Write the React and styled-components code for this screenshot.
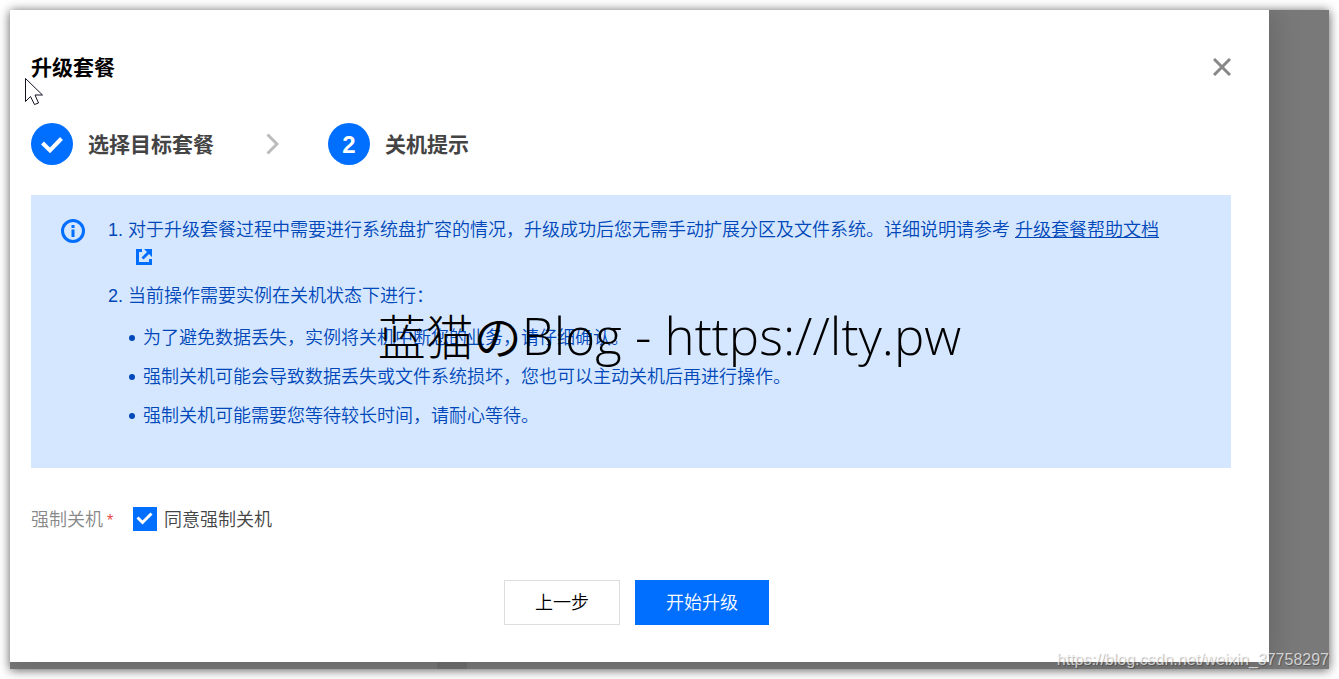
import React, { useState } from "react";
import styled, { createGlobalStyle } from "styled-components";

const GlobalStyle = createGlobalStyle`
  * {
    box-sizing: border-box;
  }

  body {
    margin: 0;
    background-color: #fff;
    font-family: "Liberation Sans", "Noto Sans CJK SC", sans-serif;
    font-size: 18px;
    font-weight: 350;
    line-height: 27px;
    color: #444;
  }
`;

const Page = styled.div`
  position: relative;
  display: flex;
  min-height: 100vh;
  padding: 10px;
  overflow: hidden;
`;

const Backdrop = styled.div`
  flex: 1;
  display: flex;
  flex-direction: column;
  padding-right: 60px;
  background-color: #797979;
  box-shadow: 0 1px 10px rgba(0, 0, 0, 0.65);
  overflow: hidden;
`;

const Dialog = styled.section`
  flex: 1;
  padding: 41px 38px 37px 21px;
  background-color: #fff;
  box-shadow: 0 0 30px rgba(0, 0, 0, 0.2);
`;

const Strip = styled.div`
  display: flex;
  height: 7px;
  padding-left: 427px;
`;

const StripTab = styled.span`
  width: 30px;
  background-color: rgba(0, 0, 0, 0.08);
`;

const Header = styled.header`
  display: flex;
  justify-content: space-between;
  align-items: center;
  height: 32px;
`;

const Title = styled.h1`
  margin: 0;
  font-size: 21px;
  font-weight: 700;
  color: #000;
`;

const CloseButton = styled.button`
  display: flex;
  padding: 0;
  border: none;
  background: none;
  color: #888;
  cursor: pointer;
`;

const Steps = styled.ol`
  display: flex;
  align-items: center;
  margin: 40px 0 30px;
  padding: 0;
  list-style: none;
`;

const Step = styled.li`
  display: flex;
  align-items: center;
  gap: 15px;
  font-size: 21px;
  font-weight: 700;
`;

const StepBadge = styled.span`
  display: flex;
  align-items: center;
  justify-content: center;
  width: 42px;
  height: 42px;
  border-radius: 50%;
  background-color: #006eff;
  color: #fff;
  font-size: 24px;
`;

const Separator = styled.svg`
  margin: 0 49px 0 52px;
`;

const Alert = styled.div`
  display: flex;
  align-items: flex-start;
  padding: 22px 60px 38px 30px;
  background-color: #d5e7ff;
  color: #0048b9;
`;

const InfoIcon = styled.svg`
  flex: none;
  margin-top: 2px;
`;

const Notes = styled.ol`
  margin: 0;
  padding-left: 43px;

  > li + li {
    margin-top: 12px;
  }
`;

const HelpLink = styled.a`
  color: inherit;
  text-decoration: underline;
`;

const ExternalIcon = styled.svg`
  display: inline-block;
  margin: 0 8px;
  vertical-align: -2px;
`;

const Bullets = styled.ul`
  display: flex;
  flex-direction: column;
  gap: 12px;
  margin: 15px 0 0;
  padding: 0;
  list-style: none;
`;

const Bullet = styled.li`
  display: flex;
  align-items: center;
  gap: 8px;

  &::before {
    content: "";
    width: 6px;
    height: 6px;
    margin: 0 0 2px 1px;
    border-radius: 50%;
    background-color: #0048b9;
  }
`;

const FormRow = styled.div`
  display: flex;
  align-items: center;
  height: 26px;
  margin-top: 38px;
`;

const FieldLabel = styled.span`
  width: 102px;
  padding-top: 2px;
  color: #888;
`;

const Required = styled.span`
  margin-left: 4px;
  font-size: 16px;
  color: #e54545;
`;

const CheckLabel = styled.label`
  display: flex;
  align-items: center;
  gap: 7px;
  cursor: pointer;
`;

const CheckText = styled.span`
  padding-top: 2px;
`;

const Checkbox = styled.input`
  appearance: none;
  width: 24px;
  height: 24px;
  margin: 0;
  border: 1px solid #006eff;
  background-color: #fff;

  &:checked {
    background: #006eff url("data:image/svg+xml,%3Csvg xmlns='http://www.w3.org/2000/svg' width='22' height='22' viewBox='0 0 22 22'%3E%3Cpath d='M3.5 9.500l5 5 9-9' fill='none' stroke='white' stroke-width='3'/%3E%3C/svg%3E") center no-repeat;
  }
`;

const Footer = styled.footer`
  display: flex;
  justify-content: center;
  gap: 15px;
  margin-top: 48px;
  padding-left: 11px;
`;

const Button = styled.button`
  height: 45px;
  padding: 2px 30px 0;
  border: 1px solid ${({ $primary }) => ($primary ? "#006eff" : "#ddd")};
  background-color: ${({ $primary }) => ($primary ? "#006eff" : "#fff")};
  color: ${({ $primary }) => ($primary ? "#fff" : "#000")};
  font: inherit;
  cursor: pointer;
`;

const BlogMark = styled.div`
  position: absolute;
  top: 298px;
  left: 0;
  right: 0;
  text-align: center;
  font-family: "Open Sans", "Noto Sans CJK SC", sans-serif;
  font-size: 48px;
  font-weight: 300;
  line-height: 72px;
  color: #000;
  white-space: nowrap;
  pointer-events: none;
`;

const Kana = styled.span`
  font-family: "Noto Sans CJK SC", sans-serif;
  font-weight: 350;
`;

const Latin = styled.span`
  font-size: 51px;
`;

const SourceMark = styled.div`
  position: absolute;
  right: 10px;
  bottom: 9px;
  font-size: 16px;
  line-height: 20px;
  color: rgba(255, 255, 255, 0.7);
  text-shadow: 1px 1px 1px rgba(0, 0, 0, 0.3);
  pointer-events: none;
`;

const Pointer = styled.svg`
  position: absolute;
  top: 78px;
  left: 25px;
  pointer-events: none;
`;

function App() {
  const [agreed, setAgreed] = useState(true);

  return (
    <Page>
      <GlobalStyle />
      <Backdrop>
        <Dialog role="dialog" aria-labelledby="dialog-title">
          <Header>
            <Title id="dialog-title">升级套餐</Title>
            <CloseButton type="button" aria-label="关闭">
              <svg width="18" height="18" viewBox="0 0 18 18" fill="none" stroke="currentColor" strokeWidth="3">
                <path d="M1 1l16 16M17 1L1 17" />
              </svg>
            </CloseButton>
          </Header>

          <Steps>
            <Step>
              <StepBadge>
                <svg width="42" height="42" viewBox="0 0 42 42" fill="none" stroke="#fff" strokeWidth="4">
                  <path d="M11.5 20l7.500 7.500L30.500 15.500" />
                </svg>
              </StepBadge>
              选择目标套餐
            </Step>
            <Separator width="13" height="22" viewBox="0 0 13 22" fill="none" stroke="#bbb" strokeWidth="3">
              <path d="M1.500 1.500L11 11l-9.500 9.500" />
            </Separator>
            <Step>
              <StepBadge>2</StepBadge>
              关机提示
            </Step>
          </Steps>

          <Alert>
            <InfoIcon width="24" height="24" viewBox="0 0 24 24">
              <circle cx="12" cy="12" r="10.500" fill="none" stroke="#006eff" strokeWidth="3" />
              <path d="M10.500 6h3v3h-3zM10.500 10.500h3V18h-3z" fill="#006eff" />
            </InfoIcon>
            <Notes>
              <li>
                对于升级套餐过程中需要进行系统盘扩容的情况，升级成功后您无需手动扩展分区及文件系统。详细说明请参考{" "}
                <HelpLink href="#help">升级套餐帮助文档</HelpLink>{" "}
                <ExternalIcon width="16" height="16" viewBox="0 0 16 16" fill="#006eff">
                  <path d="M0 0h6v3H3v10h10v-3h3v6H0z" />
                  <path d="M8 0h8v8l-3-3-5.500 5.500-2-2L11 3z" />
                </ExternalIcon>
              </li>
              <li>
                当前操作需要实例在关机状态下进行：
                <Bullets>
                  <Bullet>为了避免数据丢失，实例将关机中断您的业务，请仔细确认。</Bullet>
                  <Bullet>强制关机可能会导致数据丢失或文件系统损坏，您也可以主动关机后再进行操作。</Bullet>
                  <Bullet>强制关机可能需要您等待较长时间，请耐心等待。</Bullet>
                </Bullets>
              </li>
            </Notes>
          </Alert>

          <FormRow>
            <FieldLabel>
              强制关机<Required>*</Required>
            </FieldLabel>
            <CheckLabel>
              <Checkbox
                type="checkbox"
                checked={agreed}
                onChange={(e) => setAgreed(e.target.checked)}
              />
              <CheckText>同意强制关机</CheckText>
            </CheckLabel>
          </FormRow>

          <Footer>
            <Button type="button">上一步</Button>
            <Button type="button" $primary>开始升级</Button>
          </Footer>
        </Dialog>
        <Strip>
          <StripTab />
        </Strip>
      </Backdrop>

      <BlogMark>
        蓝猫<Kana>の</Kana>
        <Latin>Blog - https://lty.pw</Latin>
      </BlogMark>
      <SourceMark>https://blog.csdn.net/weixin_37758297</SourceMark>
      <Pointer width="19" height="28" viewBox="0 0 19 28">
        <path
          d="M.5.5v23l5-5 4 8 4-1.500-3.500-8h7.500z"
          fill="#fff"
          stroke="#112"
        />
      </Pointer>
    </Page>
  );
}

export default App;
